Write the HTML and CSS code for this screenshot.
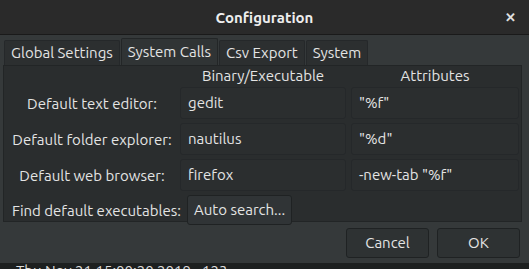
FILE: index.html
```html
<!DOCTYPE html>
<html>

<head>
    <title>Configuration</title>
    <link rel="stylesheet" href="styles.css">
</head>

<body>
    <div class="dialog">
        <div class="titlebar">
            <span class="title">Configuration</span>
            <span class="close">&#x2715;</span>
        </div>

        <div class="tabs">
            <span class="tab">Global Settings</span>
            <span class="tab active">System Calls</span>
            <span class="tab">Csv Export</span>
            <span class="tab">System</span>
        </div>

        <div class="panel">
            <div class="head"></div>
            <div class="head">Binary/Executable</div>
            <div class="head">Attributes</div>

            <div class="label">Default text editor:</div>
            <div class="entry">gedit</div>
            <div class="entry">"%f"</div>

            <div class="label">Default folder explorer:</div>
            <div class="entry">nautilus</div>
            <div class="entry">"%d"</div>

            <div class="label">Default web browser:</div>
            <div class="entry">firefox</div>
            <div class="entry">-new-tab "%f"</div>

            <div class="label find-label">Find default executables:</div>
            <div class="find"><span class="button">Auto search...</span></div>
            <div></div>
        </div>

        <div class="actions">
            <span class="button action">Cancel</span>
            <span class="button action">OK</span>
        </div>
    </div>
    <div class="behind">Thu Nov 21 15:00:20 2019 - 123</div>
</body>

</html>
```

FILE: styles.css
```css
body {
    margin: 0;
    width: 529px;
    height: 269px;
    overflow: hidden;
    background: #1d2020;
    font-family: Ubuntu, 'Noto Sans', sans-serif;
    font-size: 15px;
    color: #e4e4e4;
}

.dialog {
    height: 263px;
    background: #35393a;
    display: flex;
    flex-direction: column;
}

/* title bar */
.titlebar {
    height: 35px;
    flex-shrink: 0;
    background: #2a2a2a;
    border-bottom: 1px solid #1a1a1a;
    box-sizing: border-box;
    display: grid;
    grid-template-columns: 1fr auto 1fr;
    align-items: center;
}

.title {
    grid-column: 2;
    font-weight: bold;
    color: #eeeeee;
}

.close {
    justify-self: end;
    margin-right: 13px;
    font-size: 13px;
    font-weight: bold;
    color: #e0e0e0;
}

/* notebook tabs */
.tabs {
    display: flex;
    align-items: flex-end;
    margin: 4px 0 0 4px;
    height: 26px;
    flex-shrink: 0;
}

.tab {
    height: 24px;
    line-height: 24px;
    padding: 0 6px;
    background: #2c2f30;
    border: 1px solid #25282a;
    border-bottom: none;
    border-radius: 2px 2px 0 0;
    margin-right: 1px;
}

.tab.active {
    height: 26px;
    line-height: 26px;
    background: #303435;
    border-color: #232627;
}

/* page */
.panel {
    margin-left: 3px;
    width: 519px;
    height: 157px;
    flex-shrink: 0;
    box-sizing: border-box;
    background: #2a2d2e;
    border: 1px solid #222526;
    padding: 0 2px 0 0;
    display: grid;
    grid-template-columns: 171px 166px 168px;
    grid-template-rows: 17px 32px 32px 32px 30px;
    column-gap: 5px;
    row-gap: 4px;
}

.head {
    text-align: center;
    line-height: 20px;
}

.label {
    text-align: center;
    align-self: center;
    white-space: nowrap;
    padding-left: 5px;
}

.find-label {
    text-align: left;
    padding-left: 8px;
}

.entry {
    background: #2b2e2f;
    border: 1px solid #25282a;
    border-radius: 3px;
    padding: 0 7px;
    line-height: 30px;
}

.find {
    display: flex;
    padding-left: 7px;
}

.button {
    background: #303436;
    border: 1px solid #1f2223;
    border-radius: 3px;
    padding: 0 6px;
    line-height: 27px;
}

/* dialog buttons */
.actions {
    display: flex;
    justify-content: flex-end;
    gap: 8px;
    padding: 6px 9px 0 0;
}

.action {
    width: 83px;
    box-sizing: border-box;
    text-align: center;
    background: #2e3233;
    line-height: 28px;
}

.behind {
    height: 6px;
    overflow: hidden;
    padding-left: 16px;
    line-height: 16px;
    color: #dddddd;
}
```
